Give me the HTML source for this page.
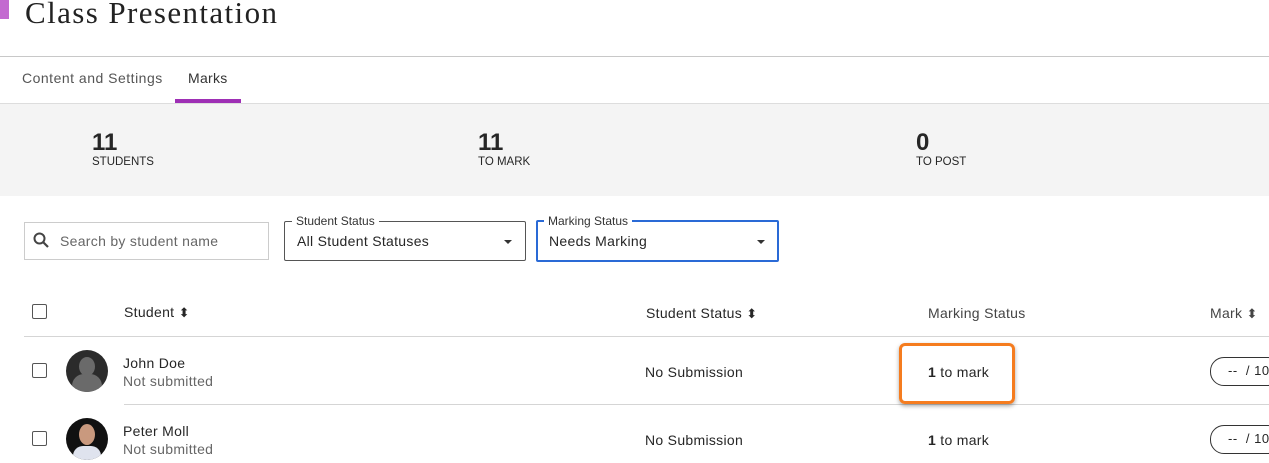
<!DOCTYPE html>
<html><head><style>
body{margin:0;width:1269px;height:463px;overflow:hidden;background:#fff;font-family:"Liberation Sans",sans-serif;color:#262626;position:relative}
.a{position:absolute;white-space:nowrap}
.t{font-size:14px;letter-spacing:.3px}
.cb{position:absolute;width:13px;height:13px;border:1.5px solid #555;border-radius:2px}
.sort{font-size:13px;letter-spacing:0}
</style></head><body>
<div class="a" style="left:0;top:0;width:9px;height:19px;background:#c36ad0"></div>
<div class="a" style="left:25px;top:-5px;font-family:'Liberation Serif',serif;font-size:31px;letter-spacing:1.4px;color:#222">Class Presentation</div>
<div class="a" style="left:0;top:56px;width:1269px;height:1px;background:#c8c8c8"></div>
<div class="a t" style="left:22px;top:70px;color:#555;letter-spacing:.5px">Content and Settings</div>
<div class="a t" style="left:188px;top:70px;color:#333">Marks</div>
<div class="a" style="left:175px;top:99px;width:66px;height:4px;background:#9e2fb5"></div>
<div class="a" style="left:0;top:103px;width:1269px;height:92px;background:#f4f4f4;border-top:1px solid #ddd"></div>
<div class="a" style="left:92px;top:129px;font-size:24px;font-weight:bold">11</div>
<div class="a" style="left:92px;top:156px;font-size:11.5px">STUDENTS</div>
<div class="a" style="left:478px;top:129px;font-size:24px;font-weight:bold">11</div>
<div class="a" style="left:478px;top:156px;font-size:11.5px">TO MARK</div>
<div class="a" style="left:916px;top:129px;font-size:24px;font-weight:bold">0</div>
<div class="a" style="left:916px;top:156px;font-size:11.5px">TO POST</div>

<div class="a" style="left:24px;top:222px;width:243px;height:36px;border:1px solid #ccc"></div>
<svg class="a" style="left:33px;top:232px" width="16" height="17"><circle cx="6.5" cy="6.5" r="5" fill="none" stroke="#444" stroke-width="2"/><path d="M10 10l5 5" stroke="#444" stroke-width="2.2"/></svg>
<div class="a t" style="left:60px;top:233px;color:#666">Search by student name</div>

<div class="a" style="left:284px;top:221px;width:240px;height:38px;border:1px solid #555;border-radius:2px"></div>
<div class="a" style="left:292px;top:214px;font-size:12px;background:#fff;padding:0 4px;color:#333">Student Status</div>
<div class="a t" style="left:297px;top:233px">All Student Statuses</div>
<div class="a" style="left:504px;top:240px;border:4px solid transparent;border-top:4px solid #333"></div>

<div class="a" style="left:536px;top:220px;width:239px;height:38px;border:2px solid #2a6ad6;border-radius:2px"></div>
<div class="a" style="left:544px;top:214px;font-size:12px;background:#fff;padding:0 4px;color:#333">Marking Status</div>
<div class="a t" style="left:549px;top:233px">Needs Marking</div>
<div class="a" style="left:757px;top:240px;border:4px solid transparent;border-top:4px solid #333"></div>

<div class="cb" style="left:32px;top:304px"></div>
<div class="a t" style="left:124px;top:304px">Student <span class="sort">⬍</span></div>
<div class="a t" style="left:646px;top:305px">Student Status <span class="sort">⬍</span></div>
<div class="a t" style="left:928px;top:305px;color:#444">Marking Status</div>
<div class="a t" style="left:1210px;top:305px;color:#444">Mark <span class="sort">⬍</span></div>
<div class="a" style="left:24px;top:336px;width:1245px;height:1px;background:#d5d5d5"></div>
<div class="a" style="left:124px;top:404px;width:1145px;height:1px;background:#d5d5d5"></div>

<div class="cb" style="left:32px;top:363px"></div>
<div class="a" style="left:66px;top:350px;width:42px;height:42px;border-radius:50%;background:#2b2b2b;overflow:hidden"><div class="a" style="left:13px;top:7px;width:16px;height:19px;border-radius:50%;background:#6a6a6a"></div><div class="a" style="left:6px;top:24px;width:30px;height:24px;border-radius:12px 12px 0 0;background:#6a6a6a"></div></div>
<div class="a t" style="left:123px;top:355px">John Doe</div>
<div class="a t" style="left:123px;top:373px;color:#666">Not submitted</div>
<div class="a t" style="left:645px;top:364px">No Submission</div>
<div class="a" style="left:899px;top:343px;width:110px;height:55px;border:3px solid #f57c1f;border-radius:6px;box-shadow:0 2px 4px rgba(0,0,0,.35)"></div>
<div class="a t" style="left:928px;top:364px"><b>1</b> to mark</div>
<div class="a" style="left:1210px;top:357px;width:70px;height:27px;border:1px solid #333;border-radius:14px"></div>
<div class="a" style="left:1228px;top:363px;font-size:13px;letter-spacing:.5px">--&nbsp; / 10</div>

<div class="cb" style="left:32px;top:431px"></div>
<div class="a" style="left:66px;top:418px;width:42px;height:42px;border-radius:50%;background:#111;overflow:hidden"><div class="a" style="left:13px;top:6px;width:16px;height:21px;border-radius:50%;background:#c9997e"></div><div class="a" style="left:7px;top:28px;width:28px;height:20px;border-radius:10px 10px 0 0;background:#dfe3ee"></div></div>
<div class="a t" style="left:123px;top:423px">Peter Moll</div>
<div class="a t" style="left:123px;top:441px;color:#666">Not submitted</div>
<div class="a t" style="left:645px;top:432px">No Submission</div>
<div class="a t" style="left:928px;top:432px"><b>1</b> to mark</div>
<div class="a" style="left:1210px;top:425px;width:70px;height:27px;border:1px solid #333;border-radius:14px"></div>
<div class="a" style="left:1228px;top:431px;font-size:13px;letter-spacing:.5px">--&nbsp; / 10</div>
</body></html>
